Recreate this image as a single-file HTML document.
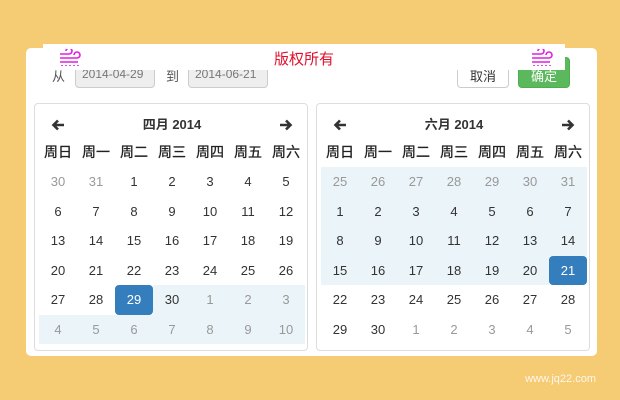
<!DOCTYPE html>
<html><head><meta charset="utf-8"><style>
*{margin:0;padding:0;box-sizing:border-box}
body{width:620px;height:400px;background:#f5cb74;position:relative;overflow:hidden;font-family:"Liberation Sans","Noto Sans CJK SC",sans-serif;color:#333}
.panel{position:absolute;left:26px;top:48px;width:571px;height:308px;background:#fff;border-radius:5px}
.banner{position:absolute;left:43px;top:44px;width:522px;height:26px;background:#fff;z-index:5}
.banner .t{position:absolute;left:0;right:0;top:4px;text-align:center;color:#e0102a;font-size:15px}
.lbl{position:absolute;top:66px;font-size:13px;color:#555}
.inp{position:absolute;top:58px;width:80px;height:30px;background:#eee;border:1px solid #ccc;border-radius:4px;font-size:12px;color:#777;padding:8px 6px}
.btn{position:absolute;top:57px;height:31px;width:52px;border-radius:4px;font-size:13px;text-align:center;padding-top:8px}
.cal{position:absolute;top:103px;width:274px;height:248px;border:1px solid #ddd;border-radius:4px;background:#fff}
table{position:absolute;left:4px;top:6px;border-collapse:separate;border-spacing:0}
td{width:38px;height:29.5px;text-align:center;font-size:13px;vertical-align:middle}
td svg{display:block;margin:2px auto 0}
tr.h td{height:27px;font-weight:bold;font-size:13px}
tr.w td{font-size:14px;font-weight:normal;color:#222;height:30px;-webkit-text-stroke:0.3px #222}
.o{color:#999}
.r{background:#ebf4f8}
.a{background:#357ebd;color:#fff;border-radius:4px}
.wm{position:absolute;right:24px;top:373px;color:#fff;font-size:11px;opacity:.85}
</style></head><body>
<div class="panel"></div>
<div class="lbl" style="left:52px">从</div>
<div class="inp" style="left:75px">2014-04-29</div>
<div class="lbl" style="left:166px">到</div>
<div class="inp" style="left:188px">2014-06-21</div>
<div class="btn" style="left:457px;background:#fff;border:1px solid #ccc;color:#333">取消</div>
<div class="btn" style="left:518px;background:#5cb85c;border:1px solid #4cae4c;color:#fff">确定</div>
<div class="banner"><div class="t">版权所有</div></div>
<svg style="position:absolute;left:58px;top:49px;z-index:6" width="26" height="18" viewBox="0 0 26 18" fill="none" stroke="#e020e0" stroke-width="1.6"><path d="M2 5h9a3 3 0 1 0-3-3M2 9h17a3 3 0 1 0-3-3M2 13h18M4 16v1M8 16v1M12 16v1M16 16v1M20 16v1"/></svg>
<svg style="position:absolute;left:530px;top:49px;z-index:6" width="26" height="18" viewBox="0 0 26 18" fill="none" stroke="#e020e0" stroke-width="1.6"><path d="M2 5h9a3 3 0 1 0-3-3M2 9h17a3 3 0 1 0-3-3M2 13h18M4 16v1M8 16v1M12 16v1M16 16v1M20 16v1"/></svg>

<div class="cal" style="left:34px"><table>
<tr class="h"><td><svg width="14" height="12" viewBox="0 0 14 12"><path d="M13 6H3M7 1.5L2.5 6 7 10.5" stroke="#333" stroke-width="2.6" fill="none"/></svg></td><td colspan="5">四月 2014</td><td><svg width="14" height="12" viewBox="0 0 14 12"><path d="M1 6h10M7 1.5L11.5 6 7 10.5" stroke="#333" stroke-width="2.6" fill="none"/></svg></td></tr>
<tr class="w"><td>周日</td><td>周一</td><td>周二</td><td>周三</td><td>周四</td><td>周五</td><td>周六</td></tr>
<tr><td class="o">30</td><td class="o">31</td><td>1</td><td>2</td><td>3</td><td>4</td><td>5</td></tr>
<tr><td>6</td><td>7</td><td>8</td><td>9</td><td>10</td><td>11</td><td>12</td></tr>
<tr><td>13</td><td>14</td><td>15</td><td>16</td><td>17</td><td>18</td><td>19</td></tr>
<tr><td>20</td><td>21</td><td>22</td><td>23</td><td>24</td><td>25</td><td>26</td></tr>
<tr><td>27</td><td>28</td><td class="a">29</td><td class="r">30</td><td class="r o">1</td><td class="r o">2</td><td class="r o">3</td></tr>
<tr><td class="r o">4</td><td class="r o">5</td><td class="r o">6</td><td class="r o">7</td><td class="r o">8</td><td class="r o">9</td><td class="r o">10</td></tr>
</table></div>

<div class="cal" style="left:316px"><table>
<tr class="h"><td><svg width="14" height="12" viewBox="0 0 14 12"><path d="M13 6H3M7 1.5L2.5 6 7 10.5" stroke="#333" stroke-width="2.6" fill="none"/></svg></td><td colspan="5">六月 2014</td><td><svg width="14" height="12" viewBox="0 0 14 12"><path d="M1 6h10M7 1.5L11.5 6 7 10.5" stroke="#333" stroke-width="2.6" fill="none"/></svg></td></tr>
<tr class="w"><td>周日</td><td>周一</td><td>周二</td><td>周三</td><td>周四</td><td>周五</td><td>周六</td></tr>
<tr><td class="r o">25</td><td class="r o">26</td><td class="r o">27</td><td class="r o">28</td><td class="r o">29</td><td class="r o">30</td><td class="r o">31</td></tr>
<tr><td class="r">1</td><td class="r">2</td><td class="r">3</td><td class="r">4</td><td class="r">5</td><td class="r">6</td><td class="r">7</td></tr>
<tr><td class="r">8</td><td class="r">9</td><td class="r">10</td><td class="r">11</td><td class="r">12</td><td class="r">13</td><td class="r">14</td></tr>
<tr><td class="r">15</td><td class="r">16</td><td class="r">17</td><td class="r">18</td><td class="r">19</td><td class="r">20</td><td class="a">21</td></tr>
<tr><td>22</td><td>23</td><td>24</td><td>25</td><td>26</td><td>27</td><td>28</td></tr>
<tr><td>29</td><td>30</td><td class="o">1</td><td class="o">2</td><td class="o">3</td><td class="o">4</td><td class="o">5</td></tr>
</table></div>
<div class="wm">www.jq22.com</div>
</body></html>
